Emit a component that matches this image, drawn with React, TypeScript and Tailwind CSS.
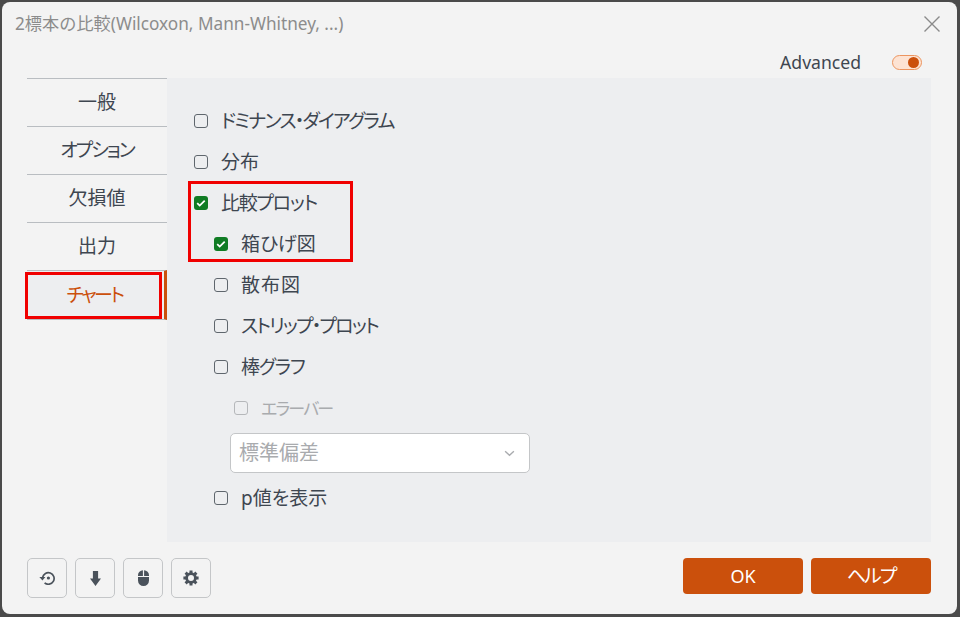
import React from 'react';

const Check = ({ checked = false, disabled = false }: { checked?: boolean; disabled?: boolean }) => {
  if (checked) {
    return (
      <span className="w-[14px] h-[14px] rounded-[3px] bg-[#107c24] flex justify-center items-center shrink-0">
        <svg viewBox="0 0 14 14" className="w-[14px] h-[14px]" fill="none" stroke="white" strokeWidth={1.8}>
          <path d="M3.2 7.2l2.5 2.4 5-5" />
        </svg>
      </span>
    );
  }
  return (
    <span
      className={`w-[14px] h-[14px] rounded-[3px] border-[1.5px] shrink-0 ${
        disabled ? 'border-[#b5b7ba]' : 'border-[#5f666d]'
      }`}
    />
  );
};

const Row = ({
  label,
  indent = 'pl-[27px]',
  checked,
  disabled,
  size = 'text-[19px]',
  tracking = '',
}: {
  label: string;
  indent?: string;
  checked?: boolean;
  disabled?: boolean;
  size?: string;
  tracking?: string;
}) => (
  <div className={`h-[41px] flex items-center gap-[13px] ${indent}`}>
    <Check checked={checked} disabled={disabled} />
    <span
      className={`${size} ${tracking} leading-none pt-[1px] [font-feature-settings:'palt'] ${
        disabled ? 'text-[#a9abae]' : 'text-[#3e4650]'
      }`}
    >
      {label}
    </span>
  </div>
);

const Tab = ({ label, tracking = '' }: { label: string; tracking?: string }) => (
  <div
    className={`h-[48px] border-t border-[#b9bdc1] flex justify-center items-center text-[19px] text-[#3e4650] [font-feature-settings:'palt'] ${tracking}`}
  >
    {label}
  </div>
);

const ToolButton = ({ children }: { children: React.ReactNode }) => (
  <button className="w-[40px] h-[40px] rounded-[5px] border-[1.5px] border-[#c4c6c8] flex justify-center items-center text-[#4a525b]">
    {children}
  </button>
);

export default function App() {
  return (
    <div className="w-[960px] h-[617px] bg-[#4a4a4a] pt-[2px] pl-[2px] pr-[3px] pb-[3px] overflow-hidden font-['Noto_Sans','Noto_Sans_CJK_JP',sans-serif]">
      <div className="relative w-full h-full bg-[#f3f3f3] rounded-lg flex flex-col">
        <div className="h-[44px] flex items-center justify-between pl-[13px] pr-[17px] shrink-0">
          <span className="text-[17.2px] text-[#8c8c8c] leading-none">2標本の比較(Wilcoxon, Mann-Whitney, ...)</span>
          <svg viewBox="0 0 16 16" className="w-[16px] h-[16px]" fill="none" stroke="#8a8a8a" strokeWidth={1.4}>
            <path d="M0.5 0.5l15 15M15.5 0.5l-15 15" />
          </svg>
        </div>

        <div className="h-[32px] flex items-center justify-end pr-[35px] gap-[31px] shrink-0">
          <span className="text-[17.6px] leading-none text-[#3e4650] pt-[2px]">Advanced</span>
          <span className="w-[30px] h-[15px] rounded-full border border-[#ec9560] bg-[#fde3d3] flex items-center justify-end pr-[2px]">
            <span className="w-[11px] h-[11px] rounded-full bg-[#cb500c]" />
          </span>
        </div>

        <div className="flex pl-[25px] pr-[26px] h-[464px] shrink-0">
          <div className="w-[140px] shrink-0">
            <Tab label="一般" />
            <Tab label="オプション" tracking="tracking-[-2px]" />
            <Tab label="欠損値" />
            <Tab label="出力" />
            <div className="h-[50px] border-t border-b border-[#b9bdc1] border-r-[3px] border-r-[#cb500c] bg-[#edeef0] flex justify-center items-center text-[19px] tracking-[-2.5px] text-[#cb500c] [font-feature-settings:'palt'] pr-[2px]">
              チャート
            </div>
          </div>

          <div className="flex-1 bg-[#edeef0] pt-[22px]">
            <Row label="ドミナンス・ダイアグラム" tracking="tracking-[-1.75px]" />
            <Row label="分布" />
            <Row label="比較プロット" checked tracking="tracking-[-1.3px]" />
            <Row label="箱ひげ図" indent="pl-[47px]" checked />
            <Row label="散布図" indent="pl-[47px]" tracking="tracking-[1px]" />
            <Row label="ストリップ・プロット" indent="pl-[47px]" tracking="tracking-[-1.8px]" />
            <Row label="棒グラフ" indent="pl-[47px]" tracking="tracking-[-1.25px]" />
            <Row label="エラーバー" indent="pl-[67px]" disabled size="text-[17px]" tracking="tracking-[-1.8px]" />
            <div className="pl-[63px] mt-[5px]">
              <div className="w-[300px] h-[40px] bg-white border border-[#c4c6c8] rounded-[5px] flex items-center justify-between pl-[8px] pr-[14px]">
                <span className="text-[20px] leading-none text-[#a9abae]">標準偏差</span>
                <svg viewBox="0 0 12 8" className="w-[11px] h-[7px]" fill="none" stroke="#a9abae" strokeWidth={1.6}>
                  <path d="M1 1.5l5 4.5 5-4.5" />
                </svg>
              </div>
            </div>
            <div className="mt-[4px]">
              <Row label="p値を表示" indent="pl-[47px]" />
            </div>
          </div>
        </div>

        <div className="flex-1 flex items-start justify-between pt-[16px] pl-[25px] pr-[26px]">
          <div className="flex gap-[8px]">
            <ToolButton>
              <svg viewBox="0 0 17 14" className="w-[17px] h-[14px]" fill="none" stroke="currentColor" strokeWidth={1.7}>
                <path d="M3.6 6.4A5.8 5.8 0 1 1 5.6 11.9" />
                <path d="M0.4 6h6L3.4 9.4z" fill="currentColor" stroke="none" />
                <circle cx="9.4" cy="7" r="1.6" fill="currentColor" stroke="none" />
              </svg>
            </ToolButton>
            <ToolButton>
              <svg viewBox="0 0 11 15" className="w-[11px] h-[15px]" fill="currentColor">
                <path d="M2.9 0h5.2v7.6h2.9L5.5 15 0 7.6h2.9z" />
              </svg>
            </ToolButton>
            <ToolButton>
              <svg viewBox="0 0 11 16" className="w-[11px] h-[16px]" fill="currentColor">
                <path d="M4.9 0.2v5.8H0V5.2A5 5 0 0 1 4.9 0.2zM6.1 0.2A5 5 0 0 1 11 5.2V6H6.1zM0 7h11v3.6a5.5 5.4 0 0 1-11 0z" />
              </svg>
            </ToolButton>
            <ToolButton>
              <svg viewBox="0 0 16 16" className="w-[16px] h-[16px]" fill="none" stroke="currentColor">
                <circle cx="8" cy="8" r="4.4" strokeWidth={2.8} />
                <path
                  d="M8 0.4v3M8 12.6v3M0.4 8h3M12.6 8h3M2.6 2.6l2.1 2.1M11.3 11.3l2.1 2.1M13.4 2.6l-2.1 2.1M4.7 11.3l-2.1 2.1"
                  strokeWidth={3}
                />
              </svg>
            </ToolButton>
          </div>
          <div className="flex gap-[8px]">
            <button className="w-[120px] h-[36px] rounded-[4px] bg-[#cb500c] text-white text-[18px] leading-none">OK</button>
            <button className="w-[120px] h-[36px] rounded-[4px] bg-[#cb500c] text-white text-[19px] tracking-[-2px] leading-none [font-feature-settings:'palt']">ヘルプ</button>
          </div>
        </div>

        {/* red callouts drawn over the shot */}
        <div className="absolute left-[186px] top-[179px] w-[165px] h-[81px] border-[3px] border-[#f00000] pointer-events-none" />
        <div className="absolute left-[23px] top-[270px] w-[137px] h-[47px] border-[3px] border-[#f00000] pointer-events-none" />
      </div>
    </div>
  );
}
